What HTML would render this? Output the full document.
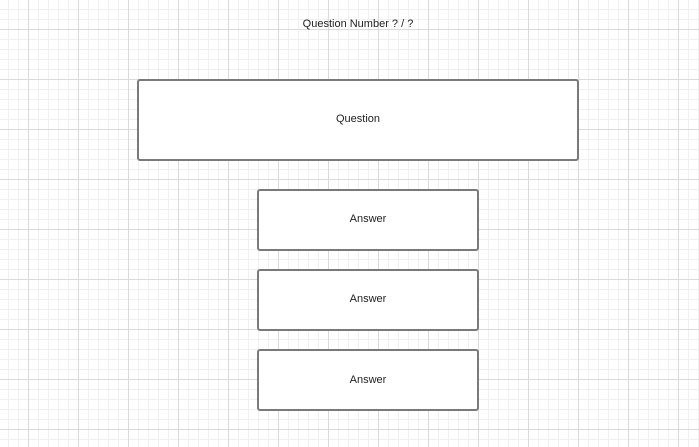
<!DOCTYPE html>
<html><head><style>
html,body{margin:0;padding:0}
body{width:699px;height:447px;overflow:hidden;position:relative;background-color:#fff;
background-image:
linear-gradient(to right,#dadada 1px,transparent 1px),
linear-gradient(to bottom,#dadada 1px,transparent 1px),
linear-gradient(to right,#f0f0f0 1px,transparent 1px),
linear-gradient(to bottom,#f0f0f0 1px,transparent 1px);
background-size:50px 50px,50px 50px,10px 10px,10px 10px;
background-position:28px 29px,28px 29px,8px 9px,8px 9px;
font-family:"Liberation Sans",sans-serif;font-size:11px;color:#222}
.b{position:absolute;box-sizing:border-box;border:2px solid #7a7a7a;border-radius:3px;background:#fff;display:flex;align-items:center;justify-content:center}
.t{position:absolute;left:0;width:716px;text-align:center;top:18px}
</style></head><body>
<div class="t">Question Number ? / ?</div>
<div class="b" style="left:137px;top:79px;width:442px;height:82px;padding-bottom:2px">Question</div>
<div class="b" style="left:257px;top:189px;width:222px;height:62px;padding-bottom:2px">Answer</div>
<div class="b" style="left:257px;top:269px;width:222px;height:62px;padding-bottom:2px">Answer</div>
<div class="b" style="left:257px;top:349px;width:222px;height:62px">Answer</div>
</body></html>
